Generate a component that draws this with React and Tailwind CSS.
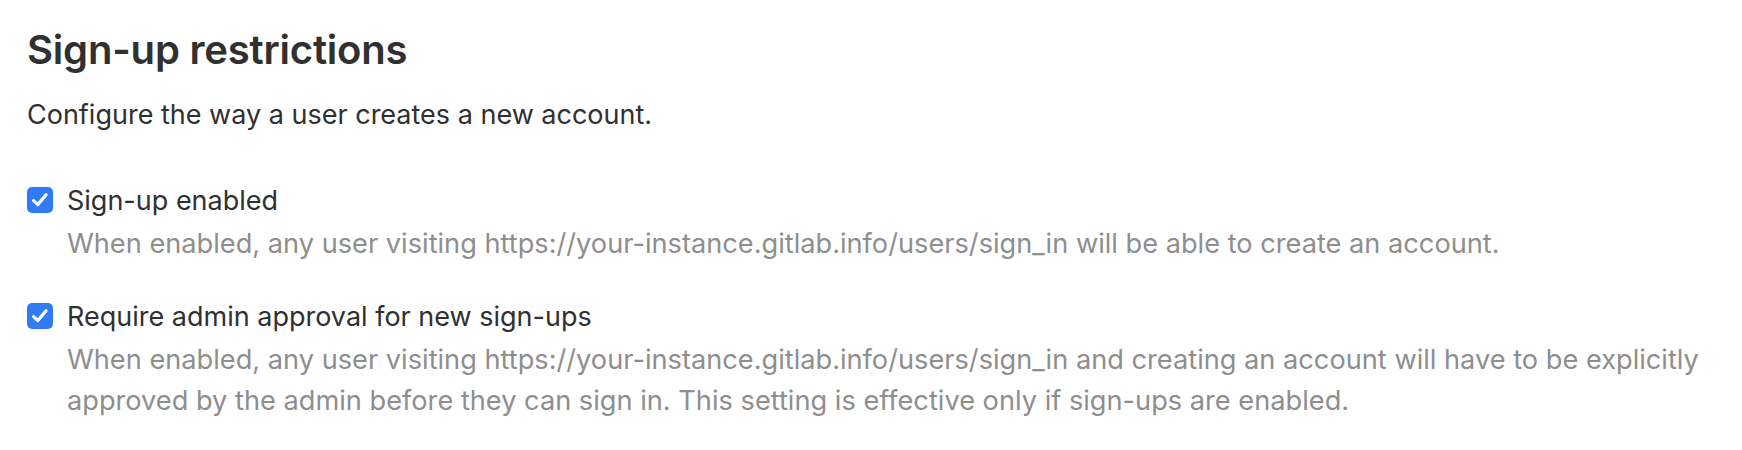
import React from "react";

function Check() {
  return (
    <span className="mt-[4px] flex h-[26px] w-[26px] shrink-0 items-center justify-center rounded-[5px] bg-[#2f7cf6]">
      <svg width="20" height="20" viewBox="0 0 20 20" fill="none">
        <path d="M3.6 10.6 L7.8 14.6 L16 4.8" stroke="white" strokeWidth="3.2" strokeLinecap="round" strokeLinejoin="round" />
      </svg>
    </span>
  );
}

export default function App() {
  return (
    <div className="bg-white px-[27px] pt-[26px] text-[#303030]" style={{ fontFamily: "Inter, 'Noto Sans', sans-serif" }}>
      <h2 className="text-[40px] font-semibold leading-[48px] tracking-[-0.2px]">Sign-up restrictions</h2>
      <p className="mt-[23px] text-[27px] leading-[36px]">Configure the way a user creates a new account.</p>
      <div className="mt-[50px] flex gap-[14px]">
        <Check />
        <div>
          <div className="text-[27px] leading-[36px]">Sign-up enabled</div>
          <div className="mt-[5px] text-[27.2px] leading-[40px] text-[#8e8e8e]">
            When enabled, any user visiting https://your-instance.gitlab.info/users/sign_in will be able to create an account.
          </div>
        </div>
      </div>
      <div className="mt-[35px] flex gap-[14px]">
        <Check />
        <div>
          <div className="text-[27px] leading-[36px]">Require admin approval for new sign-ups</div>
          <div className="mt-[4px] text-[27.2px] leading-[41px] text-[#8e8e8e]">
            <span className="whitespace-nowrap">When enabled, any user visiting https://your-instance.gitlab.info/users/sign_in and creating an account will have to be explicitly</span>
            <br />
            approved by the admin before they can sign in. This setting is effective only if sign-ups are enabled.
          </div>
        </div>
      </div>
    </div>
  );
}
